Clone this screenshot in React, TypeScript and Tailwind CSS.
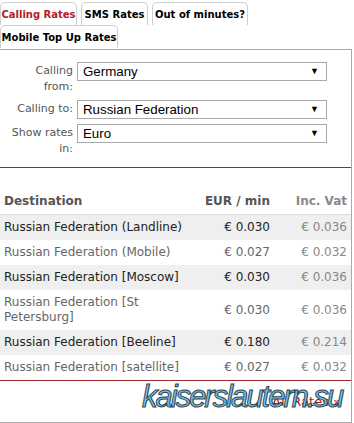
const rates = [
  { dest: 'Russian Federation (Landline)', eur: '€ 0.030', vat: '€ 0.036' },
  { dest: 'Russian Federation (Mobile)', eur: '€ 0.027', vat: '€ 0.032' },
  { dest: 'Russian Federation [Moscow]', eur: '€ 0.030', vat: '€ 0.036' },
  { dest: 'Russian Federation [St Petersburg]', eur: '€ 0.030', vat: '€ 0.036' },
  { dest: 'Russian Federation [Beeline]', eur: '€ 0.180', vat: '€ 0.214' },
  { dest: 'Russian Federation [satellite]', eur: '€ 0.027', vat: '€ 0.032' },
];

function FakeSelect({ value }: { value: string }) {
  return (
    <div className="flex h-[19px] w-[250px] items-center justify-between border border-[#a9a9a9] bg-white pl-[5px] pr-[7px] font-['Liberation_Sans',Arial,sans-serif] text-[13.3px] leading-none text-black">
      <span>{value}</span>
      <span className="text-[9px]">▼</span>
    </div>
  );
}

function Tab({ label, active, width }: { label: string; active?: boolean; width: string }) {
  return (
    <div
      className={`flex h-[23px] items-center justify-center whitespace-nowrap rounded-t-[5px] border border-b-0 border-[#cfcfcf] bg-white text-[10px] font-bold ${width} ${
        active ? 'text-[#b3202a]' : 'text-black'
      }`}
    >
      {label}
    </div>
  );
}

export default function App() {
  return (
    <div className="relative h-[423px] w-[354px] overflow-hidden bg-white font-['DejaVu_Sans',Verdana,sans-serif]">
      {/* Tabs */}
      <div className="pt-[2px]">
        <div className="flex gap-[4px]">
          <Tab label="Calling Rates" active width="w-[77px]" />
          <Tab label="SMS Rates" width="w-[67px]" />
          <Tab label="Out of minutes?" width="w-[96px]" />
        </div>
        <div className="flex">
          <Tab label="Mobile Top Up Rates" width="w-[118px]" />
        </div>
      </div>

      {/* Panel */}
      <div className="mt-[1px] w-[352px] border-r border-b border-t border-[#aaaaaa] bg-white">
        {/* Form */}
        <div className="border-b border-[#9e2a2a] pb-[10px] pt-[12px]">
          <div className="grid grid-cols-[73px_250px] gap-x-[4px] gap-y-[5px] text-[11px] leading-[16px] text-[#555]">
            <div className="pt-[1px] text-right">
              Calling
              <br />
              from:
            </div>
            <div>
              <FakeSelect value="Germany" />
            </div>
            <div className="pt-[1px] text-right whitespace-nowrap">Calling to:</div>
            <div>
              <FakeSelect value="Russian Federation" />
            </div>
            <div className="pt-[1px] text-right whitespace-nowrap">
              Show rates
              <br />
              in:
            </div>
            <div>
              <FakeSelect value="Euro" />
            </div>
          </div>
        </div>

        {/* Rates table */}
        <div className="mt-[21px] border-b border-[#9e2a2a] text-[12px] leading-[15px]">
          <div className="grid grid-cols-[198px_76px_1fr] border-b border-[#dddddd] py-[5px] font-bold">
            <div className="pl-[4px] text-[#555]">Destination</div>
            <div className="pr-[4px] text-right text-[#555]">EUR / min</div>
            <div className="pr-[4px] text-right text-[#888]">Inc. Vat</div>
          </div>
          {rates.map((r, i) => {
            const odd = i % 2 === 0;
            return (
              <div
                key={r.dest}
                className={`grid grid-cols-[198px_76px_1fr] items-center py-[5px] ${
                  odd ? 'bg-[#efefef] text-[#222]' : 'bg-white text-[#666]'
                }`}
              >
                <div className="pl-[4px]">{r.dest}</div>
                <div className="pr-[4px] text-right">{r.eur}</div>
                <div className="pr-[4px] text-right text-[#888]">{r.vat}</div>
              </div>
            );
          })}
        </div>

        <div className="flex h-[41px] items-center justify-end pr-[10px]">
          <span className="text-[13px] text-[#a31515]">All Rates »</span>
        </div>
      </div>

      {/* Watermark */}
      <div className="pointer-events-none absolute left-[142px] top-[381px] font-['Liberation_Sans',Arial,sans-serif] text-[31px] italic leading-none tracking-[-2px] text-[#6cc3ee] [-webkit-text-stroke:1px_#34434d]">
        kaiserslautern.su
      </div>
    </div>
  );
}
